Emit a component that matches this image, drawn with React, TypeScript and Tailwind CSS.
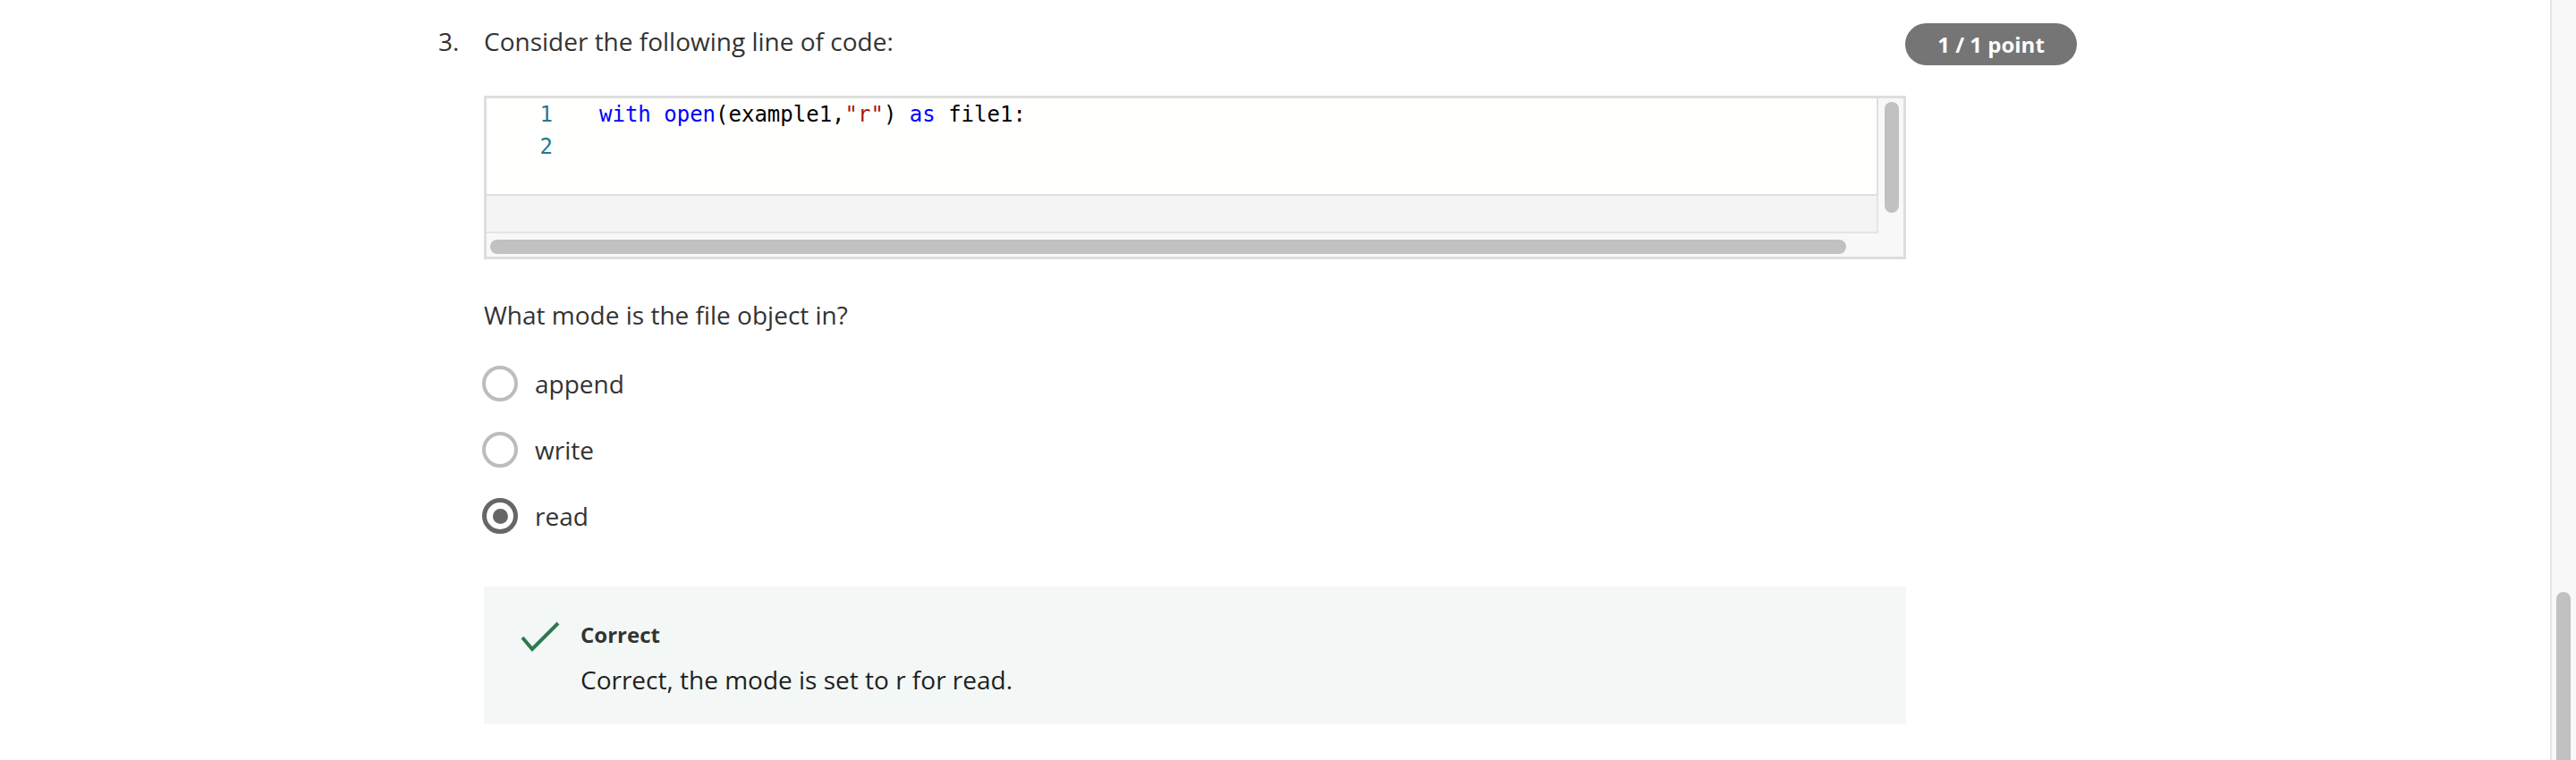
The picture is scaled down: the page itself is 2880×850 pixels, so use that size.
import React from "react";

const options = [
  { label: "append", checked: false },
  { label: "write", checked: false },
  { label: "read", checked: true },
];

const Radio = ({ checked }: { checked: boolean }) =>
  checked ? (
    <div className="w-[40px] h-[40px] rounded-full border-[5px] border-[#666666] flex items-center justify-center shrink-0">
      <div className="w-[17px] h-[17px] rounded-full bg-[#666666]" />
    </div>
  ) : (
    <div className="w-[40px] h-[40px] rounded-full border-[4px] border-[#bdbdbd] shrink-0" />
  );

const CodeBox = () => (
  <div className="w-[1590px] h-[183px] border-[3px] border-[#dedede] bg-[#f8f8f8] flex">
    <div className="flex-1 flex flex-col">
      <div className="h-[109px] bg-[#fffffe] border-r-2 border-b-2 border-[#dedede] font-['DejaVu_Sans_Mono',monospace] text-[24px] leading-[36px]">
        <div className="flex">
          <div className="w-[74px] text-right text-[#237893]">1</div>
          <div className="ml-[52px] text-black whitespace-pre">
            <span className="text-[#0000ff]">with</span> <span className="text-[#0000ff]">open</span>(example1,
            <span className="text-[#a31515]">"r"</span>) <span className="text-[#0000ff]">as</span> file1:
          </div>
        </div>
        <div className="flex">
          <div className="w-[74px] text-right text-[#237893]">2</div>
        </div>
      </div>
      <div className="h-[42px] bg-[#f4f4f4] border-r-2 border-b-2 border-[#e4e4e4]" />
      <div className="flex-1 pt-[7px] pl-[4px] pr-[36px]">
        <div className="h-[16px] rounded-full bg-[#c1c1c1]" />
      </div>
    </div>
    <div className="w-[28px] pt-[4px] pl-[7px]">
      <div className="w-[16px] h-[124px] rounded-full bg-[#c1c1c1]" />
    </div>
  </div>
);

export default function App() {
  return (
    <div className="flex w-full h-[850px] overflow-hidden bg-white font-['Open_Sans',sans-serif] text-[#333333]">
      <div className="flex-1 pl-[490px] pt-[26px]">
        <div className="flex w-[1832px]">
          <div className="w-[51px] text-[28px] leading-[40px]">3.</div>
          <div className="flex-1 flex flex-col">
            <div className="flex items-start">
              <div className="flex-1 text-[28px] leading-[40px]">Consider the following line of code:</div>
              <div className="h-[47px] w-[192px] rounded-full bg-[#757575] text-white font-bold text-[24px] flex items-center justify-center">
                1 / 1 point
              </div>
            </div>

            <div className="mt-[34px]">
              <CodeBox />
            </div>

            <div className="mt-[42px] text-[28px] leading-[40px]">What mode is the file object in?</div>

            <div className="mt-[37px] flex flex-col gap-[34px]">
              {options.map((o) => (
                <div key={o.label} className="flex items-center h-[40px] -ml-[2px]">
                  <Radio checked={o.checked} />
                  <span className="ml-[19px] text-[28px] leading-[40px]">{o.label}</span>
                </div>
              ))}
            </div>

            <div className="mt-[59px] w-[1590px] h-[154px] bg-[#f3f8f6] pt-[38px] pl-[40px] flex">
              <svg width="46" height="36" viewBox="0 0 46 36" className="shrink-0">
                <polyline points="3,19 14,32 43,3" fill="none" stroke="#2e7a50" strokeWidth="4" />
              </svg>
              <div className="ml-[22px] flex flex-col">
                <div className="text-[24px] leading-[32px] font-bold text-[#333333]">Correct</div>
                <div className="mt-[14px] text-[28px] leading-[40px] text-[#1f1f1f]">
                  Correct, the mode is set to r for read.
                </div>
              </div>
            </div>
          </div>
        </div>
      </div>

      <div className="w-[29px] h-full bg-[#f8f8f8] border-l-2 border-[#e6e6e6] pl-[5px] pt-[662px]">
        <div className="w-[16px] h-[300px] rounded-t-full bg-[#c1c1c1]" />
      </div>
    </div>
  );
}
